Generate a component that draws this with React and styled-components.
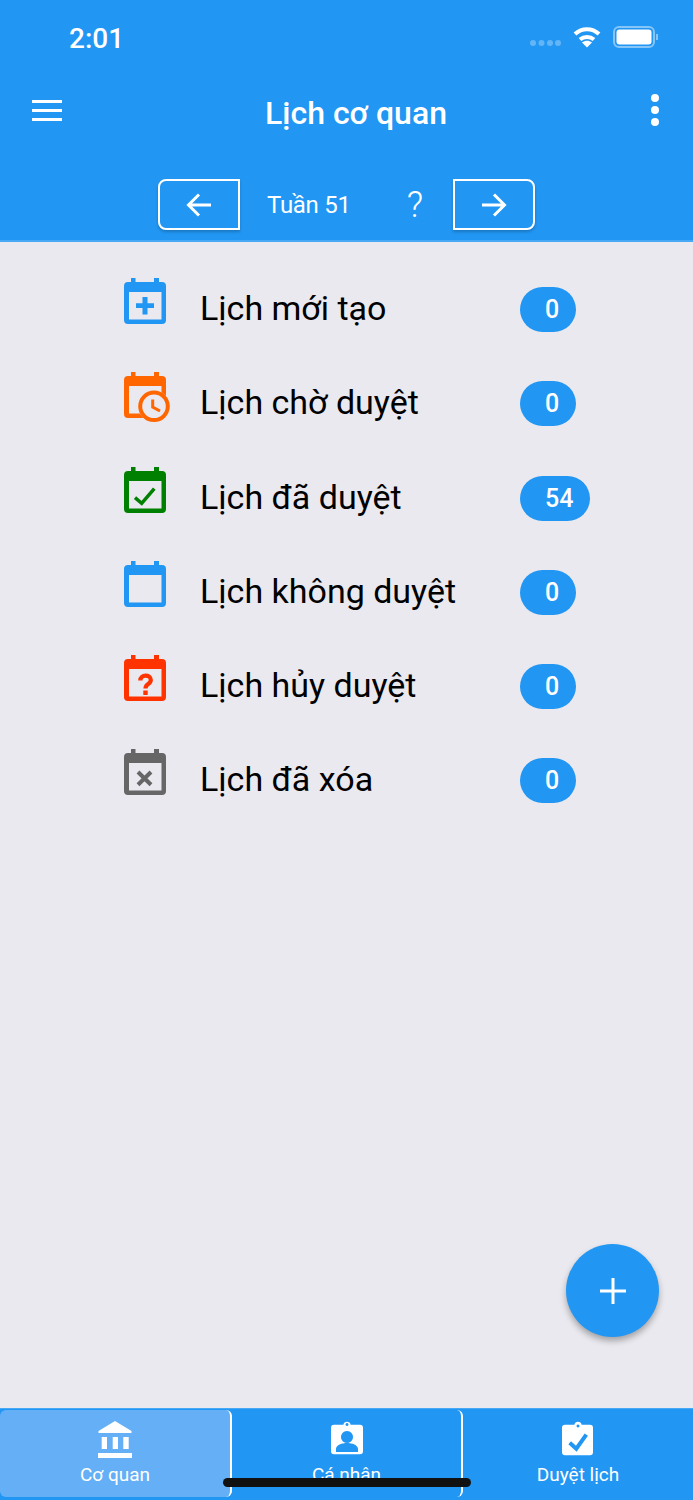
import React from 'react';
import styled, { createGlobalStyle } from 'styled-components';

const GlobalStyle = createGlobalStyle`
  html, body {
    margin: 0;
    padding: 0;
    background: #eae9ef;
    font-family: Roboto, "Liberation Sans", sans-serif;
  }
`;

const Page = styled.div`
  width: 693px;
  height: 1500px;
  position: relative;
  overflow: hidden;
  display: flex;
  flex-direction: column;
  background: #eae9ef;
`;

const Header = styled.header`
  height: 242px;
  flex: none;
  box-sizing: border-box;
  background: #2196f3;
  border-bottom: 2px solid #47a8f5;
  color: #fff;
`;

const StatusBar = styled.div`
  height: 76px;
  box-sizing: border-box;
  padding: 21px 35px 0 69px;
  display: flex;
  justify-content: space-between;
  align-items: flex-start;
`;

const Clock = styled.span`
  font-size: 28px;
  line-height: 35px;
  font-weight: 500;
`;

const StatusIcons = styled.div`
  display: flex;
  align-items: center;
  gap: 12px;
  padding-top: 5px;
`;

const AppBar = styled.div`
  height: 74px;
  box-sizing: border-box;
  padding: 0 33px 0 32px;
  display: flex;
  align-items: center;
  justify-content: space-between;
`;

const Title = styled.h1`
  margin: 0;
  font-size: 32px;
  line-height: 74px;
  font-weight: 500;
`;

const MenuIcon = styled.svg`
  margin-bottom: 5px;
`;

const DotsIcon = styled.svg`
  margin-bottom: 7px;
`;

const WeekBar = styled.div`
  height: 90px;
  box-sizing: border-box;
  padding: 29px 0 0 158px;
  display: flex;
  align-items: flex-start;
`;

const ArrowButton = styled.button`
  width: 82px;
  height: 51px;
  padding: 0;
  background: transparent;
  border: 2px solid #fff;
  border-radius: ${(p) => (p.$side === 'left' ? '8px 0 0 8px' : '0 8px 8px 0')};
  display: flex;
  align-items: center;
  justify-content: center;
  box-shadow: 0 2px 3px rgba(0, 0, 0, 0.2);
`;

const WeekLabel = styled.span`
  width: 137px;
  padding: 1px 0 0 27px;
  box-sizing: border-box;
  font-size: 24px;
  line-height: 51px;
  letter-spacing: -0.3px;
`;

const Help = styled.span`
  width: 76px;
  font-size: 36px;
  font-weight: 300;
  line-height: 52px;
  text-align: center;
`;

const List = styled.main`
  flex: 1;
  padding: 20px 0 0 124px;
  display: flex;
  flex-direction: column;
`;

const Row = styled.div`
  height: 94.3px;
  display: flex;
  align-items: flex-start;
`;

const IconSlot = styled.div`
  width: 76px;
  flex: none;
  height: 52px;
  padding-top: 16px;
  line-height: 0;
`;

const RowLabel = styled.span`
  width: 320px;
  flex: none;
  font-size: 34px;
  line-height: 44px;
  padding-top: 24px;
  color: #000;
`;

const Badge = styled.span`
  height: 45px;
  margin-top: 25px;
  box-sizing: border-box;
  padding: 0 17px 0 25px;
  border-radius: 23px;
  background: #2196f3;
  color: #fff;
  font-size: 25px;
  font-weight: 500;
  line-height: 46px;
`;

const Fab = styled.button`
  position: absolute;
  left: 566px;
  top: 1244px;
  width: 93px;
  height: 93px;
  padding: 0;
  border: none;
  border-radius: 50%;
  background: #2196f3;
  display: flex;
  align-items: center;
  justify-content: center;
  box-shadow: 0 4px 6px rgba(0, 0, 0, 0.3);
`;

const TabBar = styled.nav`
  height: 92px;
  flex: none;
  box-sizing: border-box;
  padding: 1px 0 3px;
  background: #2196f3;
  border-top: 1px solid #47a8f5;
  display: grid;
  grid-template-columns: 232px 231px 1fr;
`;

const Tab = styled.div`
  box-sizing: border-box;
  border-right: ${(p) => (p.$last ? 'none' : '2px solid #fff')};
  border-radius: ${(p) => (p.$active ? '6px' : '0 6px 6px 0')};
  background: ${(p) => (p.$active ? '#64aff6' : 'transparent')};
  color: #fff;
  display: flex;
  flex-direction: column;
  align-items: center;
  padding-top: 11px;
  overflow: hidden;
`;

const TabIcon = styled.div`
  height: 37px;
  line-height: 0;
`;

const TabLabel = styled.span`
  font-size: 19px;
  line-height: 22px;
  margin-top: 6px;
`;

const HomeIndicator = styled.div`
  position: absolute;
  left: 223px;
  top: 1478px;
  width: 248px;
  height: 9px;
  border-radius: 5px;
  background: #111;
`;

const Calendar = ({ color, children }) => (
  <svg width="48" height="52" viewBox="0 0 48 52">
    <path
      fill={color}
      fillRule="evenodd"
      d="M7 0h4.500v4h18.500V0h5v4h3a4 4 0 0 1 4 4v34a4 4 0 0 1-4 4H4a4 4 0 0 1-4-4V8a4 4 0 0 1 4-4h3zM5 14v27.500h32.500V14z"
    />
    {children}
  </svg>
);

const rows = [
  {
    label: 'Lịch mới tạo',
    count: 0,
    color: '#2196f3',
    mark: <path fill="#2196f3" d="M18.500 19h5v6.300H30v4.800h-6.500v6.400h-5v-6.400H12v-4.800h6.500z" />,
  },
  {
    label: 'Lịch chờ duyệt',
    count: 0,
    color: '#ff6600',
    mark: (
      <>
        <circle cx="30" cy="34.300" r="15.800" fill="#eae9ef" />
        <circle cx="30" cy="34.300" r="13.800" fill="none" stroke="#ff6600" strokeWidth="4" />
        <path fill="none" stroke="#ff6600" strokeWidth="3" d="M28.700 27.500v7.500l7.300 4" />
      </>
    ),
  },
  {
    label: 'Lịch đã duyệt',
    count: 54,
    color: '#008000',
    mark: <path fill="none" stroke="#008000" strokeWidth="3.500" d="M11 30.700l6.700 5.600L30.300 21.700" />,
  },
  { label: 'Lịch không duyệt', count: 0, color: '#2196f3' },
  {
    label: 'Lịch hủy duyệt',
    count: 0,
    color: '#ff3300',
    mark: (
      <>
        <path
          fill="none"
          stroke="#ff3300"
          strokeWidth="4.200"
          d="M16.300 25.500c0-6.500 10.500-6.500 10.500-0.500 0 4.500-5.300 3.500-5.300 8.500"
        />
        <path fill="#ff3300" d="M19.300 35.500h4.400V40h-4.400z" />
      </>
    ),
  },
  {
    label: 'Lịch đã xóa',
    count: 0,
    color: '#666666',
    mark: <path fill="none" stroke="#666666" strokeWidth="4" d="M14 23l13 12.800M27 23L14 35.800" />,
  },
];

const App = () => (
  <Page>
    <GlobalStyle />
    <Header>
      <StatusBar>
        <Clock>2:01</Clock>
        <StatusIcons>
          <svg width="31" height="10" viewBox="0 0 31 10" style={{ marginTop: 12 }}>
            <g fill="#fff" fillOpacity="0.3">
              <circle cx="3" cy="5" r="3" />
              <circle cx="11.500" cy="5" r="3" />
              <circle cx="20" cy="5" r="3" />
              <circle cx="28" cy="5" r="3" />
            </g>
          </svg>
          <svg width="28" height="22" viewBox="0 0 28 22">
            <path fill="none" stroke="#fff" strokeWidth="4" d="M2 8c7-6.500 17-6.500 24 0M7 13.500c4-3.500 10-3.500 14 0" />
            <path fill="#fff" d="M14 21.500l-5-5c3-2.200 7-2.200 10 0z" />
          </svg>
          <svg width="45" height="22" viewBox="0 0 45 22">
            <rect x="1" y="1" width="40" height="20" rx="5" fill="none" stroke="#fff" strokeOpacity="0.45" strokeWidth="2" />
            <rect x="3.500" y="3.500" width="35" height="15" rx="3" fill="#fff" />
            <rect x="43" y="8" width="2" height="6" fill="#fff" fillOpacity="0.45" />
          </svg>
        </StatusIcons>
      </StatusBar>
      <AppBar>
        <MenuIcon width="30" height="21" viewBox="0 0 30 21">
          <path fill="#fff" d="M0 0h30v3H0zM0 9h30v3H0zM0 18h30v3H0z" />
        </MenuIcon>
        <Title>Lịch cơ quan</Title>
        <DotsIcon width="10" height="34" viewBox="0 0 10 34">
          <circle cx="5" cy="5" r="4" fill="#fff" />
          <circle cx="5" cy="17" r="4" fill="#fff" />
          <circle cx="5" cy="29" r="4" fill="#fff" />
        </DotsIcon>
      </AppBar>
      <WeekBar>
        <ArrowButton $side="left">
          <svg width="26" height="24" viewBox="0 0 26 24">
            <path fill="none" stroke="#fff" strokeWidth="3" d="M25 12H3M13 1.500L2.500 12 13 22.500" />
          </svg>
        </ArrowButton>
        <WeekLabel>Tuần 51</WeekLabel>
        <Help>?</Help>
        <ArrowButton $side="right">
          <svg width="26" height="24" viewBox="0 0 26 24">
            <path fill="none" stroke="#fff" strokeWidth="3" d="M1 12h22M13 1.500L23.500 12 13 22.500" />
          </svg>
        </ArrowButton>
      </WeekBar>
    </Header>

    <List>
      {rows.map((row) => (
        <Row key={row.label}>
          <IconSlot>
            <Calendar color={row.color}>{row.mark}</Calendar>
          </IconSlot>
          <RowLabel>{row.label}</RowLabel>
          <Badge>{row.count}</Badge>
        </Row>
      ))}
    </List>

    <Fab>
      <svg width="26" height="26" viewBox="0 0 26 26">
        <path fill="#fff" d="M11.500 0h3v11.500H26v3H14.500V26h-3V14.500H0v-3h11.500z" />
      </svg>
    </Fab>

    <TabBar>
      <Tab $active>
        <TabIcon>
          <svg width="34" height="37" viewBox="0 0 34 37">
            <path fill="#fff" d="M17 0l16.500 10v2H.5v-2zM3.700 16H9v12H3.700zM14.700 16H20v12h-5.300zM25.300 16h5.400v12h-5.400zM0 32h34v5H0z" />
          </svg>
        </TabIcon>
        <TabLabel>Cơ quan</TabLabel>
      </Tab>
      <Tab>
        <TabIcon>
          <svg width="32" height="34" viewBox="0 0 32 34">
            <path
              fill="#fff"
              fillRule="evenodd"
              d="M3 3.700h9.400a3.700 3.700 0 0 1 7.200 0H29a3 3 0 0 1 3 3V30.300a3 3 0 0 1-3 3H3a3 3 0 0 1-3-3V6.700a3 3 0 0 1 3-3zM16 2a1.500 1.500 0 1 0 .01 0zM16 10a6 6 0 1 0 .01 0zM5 31h22v-3c0-4-6-6-11-6s-11 2-11 6z"
            />
          </svg>
        </TabIcon>
        <TabLabel>Cá nhân</TabLabel>
      </Tab>
      <Tab $last>
        <TabIcon>
          <svg width="32" height="35" viewBox="0 0 32 35">
            <path
              fill="#fff"
              fillRule="evenodd"
              d="M3 3.700h9.400a3.700 3.700 0 0 1 7.200 0H28a3 3 0 0 1 3 3V31.300a3 3 0 0 1-3 3H3a3 3 0 0 1-3-3V6.700a3 3 0 0 1 3-3zM16 3.500a1.500 1.500 0 1 0 .01 0z"
            />
            <path fill="none" stroke="#2196f3" strokeWidth="4" d="M7.700 21.700l6.600 6L24.300 13.700" />
          </svg>
        </TabIcon>
        <TabLabel>Duyệt lịch</TabLabel>
      </Tab>
    </TabBar>
    <HomeIndicator />
  </Page>
);

export default App;
